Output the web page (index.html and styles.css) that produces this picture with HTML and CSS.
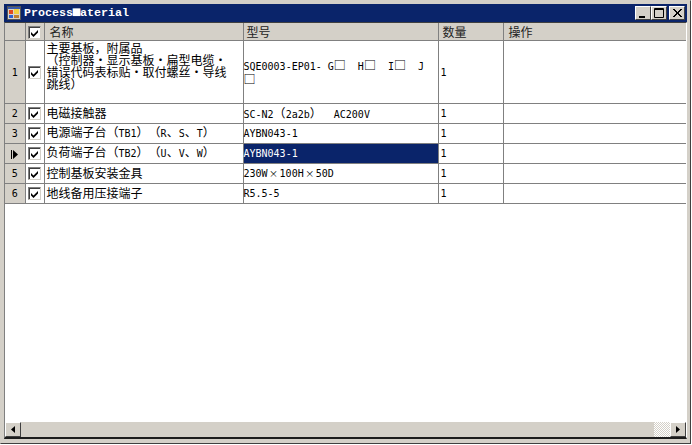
FILE: index.html
```html
<!DOCTYPE html>
<html lang="zh">
<head>
<meta charset="utf-8">
<title>ProcessMaterial</title>
<link rel="stylesheet" href="styles.css">
</head>
<body>
<div class="window">
  <div class="titlebar">
    <svg class="appicon" viewBox="0 0 14 14" width="14" height="14"><rect x="0.5" y="0.5" width="13" height="13" fill="#d8d4cc" stroke="#555"/><rect x="1" y="1" width="12" height="2" fill="#3a5aa8"/><rect x="2" y="4" width="4" height="4" fill="#e04a20"/><rect x="7" y="3" width="5" height="5" fill="#f2d040"/><rect x="2" y="9" width="4" height="3" fill="#3060d0"/><rect x="7" y="9" width="5" height="3" fill="#c08030"/></svg>
    <span class="title">Process<span class="blk">■</span>aterial</span>
    <div class="controls">
      <button class="ctl"><svg viewBox="0 0 16 14" width="16" height="14"><rect x="4" y="10" width="6" height="2" fill="#000"/></svg></button>
      <button class="ctl"><svg viewBox="0 0 16 14" width="16" height="14"><path d="M3.500 2.500h9v9h-9z M3 3.500h10" fill="none" stroke="#000"/></svg></button>
      <button class="ctl close"><svg viewBox="0 0 16 14" width="16" height="14"><path d="M4 3l8 8M5 3l8 8M12 3l-8 8M13 3l-8 8" stroke="#000" fill="none"/></svg></button>
    </div>
  </div>
  <div class="grid">
    <table class="table">
      <colgroup><col class="c-rh"><col class="c-ck"><col class="c-name"><col class="c-model"><col class="c-qty"><col></colgroup>
      <thead>
        <tr>
          <th class="rh"></th>
          <th class="ckc"><span class="ck"><svg viewBox="0 0 13 13" width="13" height="13"><path d="M3 6l2.500 2.500L10 4v2.500L5.500 11 3 8.500z" fill="#000"/></svg></span></th>
          <th>名称</th><th class="h-model">型号</th><th class="h-qty">数量</th><th class="h-op">操作</th>
        </tr>
      </thead>
      <tbody>
        <tr class="tall">
          <td class="rh"><span class="lat">1</span></td>
          <td class="ckc"><span class="ck"><svg viewBox="0 0 13 13" width="13" height="13"><path d="M3 6l2.500 2.500L10 4v2.500L5.500 11 3 8.500z" fill="#000"/></svg></span></td>
          <td class="wrap">主要基板，附属品<br>（控制器・显示基板・扁型电缆・错误代码表标贴・取付螺丝・导线跳线）</td>
          <td class="mono model">SQE0003-EP01- G<span class="cj">□</span>&nbsp; H<span class="cj">□</span>&nbsp; I<span class="cj">□</span>&nbsp; J <span class="cj">□</span></td>
          <td class="mono">1</td><td></td>
        </tr>
        <tr>
          <td class="rh"><span class="lat">2</span></td>
          <td class="ckc"><span class="ck"><svg viewBox="0 0 13 13" width="13" height="13"><path d="M3 6l2.500 2.500L10 4v2.500L5.500 11 3 8.500z" fill="#000"/></svg></span></td>
          <td>电磁接触器</td>
          <td class="mono model">SC-N2<span class="cj">（</span>2a2b<span class="cj">）</span>&nbsp; AC200V</td>
          <td class="mono">1</td><td></td>
        </tr>
        <tr>
          <td class="rh"><span class="lat">3</span></td>
          <td class="ckc"><span class="ck"><svg viewBox="0 0 13 13" width="13" height="13"><path d="M3 6l2.500 2.500L10 4v2.500L5.500 11 3 8.500z" fill="#000"/></svg></span></td>
          <td>电源端子台（<span class="lat">TB1</span>）（<span class="lat">R</span>、<span class="lat">S</span>、<span class="lat">T</span>）</td>
          <td class="mono model">AYBN043-1</td>
          <td class="mono">1</td><td></td>
        </tr>
        <tr>
          <td class="rh cur"><svg class="cursor" viewBox="0 0 9 9" width="9" height="9"><path d="M1 0v9h1V0z M3 0l5 4.500L3 9z" fill="#000"/></svg></td>
          <td class="ckc"><span class="ck"><svg viewBox="0 0 13 13" width="13" height="13"><path d="M3 6l2.500 2.500L10 4v2.500L5.500 11 3 8.500z" fill="#000"/></svg></span></td>
          <td>负荷端子台（<span class="lat">TB2</span>）（<span class="lat">U</span>、<span class="lat">V</span>、<span class="lat">W</span>）</td>
          <td class="mono model sel">AYBN043-1</td>
          <td class="mono">1</td><td></td>
        </tr>
        <tr>
          <td class="rh"><span class="lat">5</span></td>
          <td class="ckc"><span class="ck"><svg viewBox="0 0 13 13" width="13" height="13"><path d="M3 6l2.500 2.500L10 4v2.500L5.500 11 3 8.500z" fill="#000"/></svg></span></td>
          <td>控制基板安装金具</td>
          <td class="mono model">230W<span class="cj times">×</span>100H<span class="cj times">×</span>50D</td>
          <td class="mono">1</td><td></td>
        </tr>
        <tr>
          <td class="rh"><span class="lat">6</span></td>
          <td class="ckc"><span class="ck"><svg viewBox="0 0 13 13" width="13" height="13"><path d="M3 6l2.500 2.500L10 4v2.500L5.500 11 3 8.500z" fill="#000"/></svg></span></td>
          <td>地线备用压接端子</td>
          <td class="mono model">R5.5-5</td>
          <td class="mono">1</td><td></td>
        </tr>
      </tbody>
    </table>
    <div class="scrollbar">
      <span class="arrow"><svg viewBox="0 0 16 15" width="16" height="15"><path d="M10 4v7L6 7.500z" fill="#000"/></svg></span>
      <span class="track"></span>
      <span class="thumb"></span>
      <span class="arrow"><svg viewBox="0 0 16 15" width="16" height="15"><path d="M6 4v7l4-3.500z" fill="#000"/></svg></span>
    </div>
  </div>
</div>
</body>
</html>
```

FILE: styles.css
```css
* { box-sizing: border-box; }
html, body { margin: 0; padding: 0; background: #ffffff; }
body { width: 692px; height: 445px; overflow: hidden; font-family: "Noto Sans CJK SC", "Liberation Sans", sans-serif; font-size: 12px; color: #000; text-spacing-trim: space-all; }
.window { width: 691px; height: 444px; background: #d4d0c8; border: 1px solid #404040; border-top-color: #d4d0c8; border-left-color: #d4d0c8; padding: 3px 3px 4px; display: flex; flex-direction: column; }
.titlebar { height: 18px; background: #0a246a; display: flex; align-items: center; padding: 0 2px 0 3px; gap: 3px; flex: none; }
.appicon { flex: none; }
.title { color: #fff; font-family: "Liberation Mono", monospace; font-weight: 700; font-size: 11.67px; line-height: 14px; }
.blk { display: inline-block; transform: scale(1.35); }
.controls { margin-left: auto; display: flex; }
.ctl { width: 16px; height: 14px; padding: 0; border: 1px solid; border-color: #fff #404040 #404040 #fff; background: #d4d0c8; display: block; }
.ctl svg { display: block; margin: -1px; }
.close { margin-left: 2px; }
.grid { flex: 1; min-height: 0; background: #fff; border: 1px solid; border-color: #404040 #fff #1c1c1c #808080; border-bottom-width: 2px; display: flex; flex-direction: column; justify-content: space-between; }
.table { width: 100%; table-layout: fixed; border-collapse: collapse; }
.c-rh { width: 20px; }
.c-ck { width: 19px; }
.c-name { width: 199px; }
.c-model { width: 195px; }
.c-qty { width: 65px; }
th { height: 17px; background: #d4d0c8; font-weight: 400; text-align: left; padding: 2px 0 0 5px; border: 1px solid #808080; border-top: 0; line-height: 14px; color: #222; }
th.h-model { padding-left: 3px; }
th.h-qty { padding-left: 4px; }
th.h-op { padding-left: 5px; }
td { height: 20px; padding: 0 2px; border: 1px solid #808080; line-height: 12px; vertical-align: middle; background: #fff; }
th:last-child, td:last-child { border-right: 0; }
th:first-child, td:first-child { border-left: 0; }
.tall td { height: 63px; }
td.rh, th.rh { background: #d4d0c8; text-align: center; padding: 0; }
td.wrap { line-height: 12px; vertical-align: top; padding: 1px 12px 0 2px; }
.mono, .lat { font-family: "DejaVu Sans Mono", "Noto Sans CJK SC", monospace; font-size: 10px; }
td.mono { padding-top: 2px; }
td.model { padding-left: 0; }
.cj { font-family: "Noto Sans CJK SC", sans-serif; font-size: 12px; }
.times { display: inline-block; width: 12px; text-align: center; font-size: 9px; }
.ckc { padding: 0; text-align: center; }
th.ckc { padding: 0; }
.ck { display: inline-block; width: 13px; height: 13px; border: 1px solid; border-color: #808080 #d4d0c8 #d4d0c8 #808080; background: #fff; box-shadow: inset 1px 1px 0 #404040; vertical-align: middle; }
.ck svg { display: block; margin: -1px; }
.sel { background: #0a246a; color: #fff; }
.cursor { display: inline-block; vertical-align: middle; }
.scrollbar { height: 15px; display: flex; flex: none; background: #d4d0c8; }
.arrow { width: 16px; height: 15px; flex: none; background: #d4d0c8; border: 1px solid; border-color: #fff #404040 #404040 #fff; overflow: hidden; }
.arrow svg { display: block; margin: -1px; }
.track { flex: 1; background: #d4d0c8; }
.thumb { width: 16px; height: 15px; flex: none; background: repeating-conic-gradient(#fff 0 25%, #d4d0c8 0 50%) 0 0 / 2px 2px; }
```
